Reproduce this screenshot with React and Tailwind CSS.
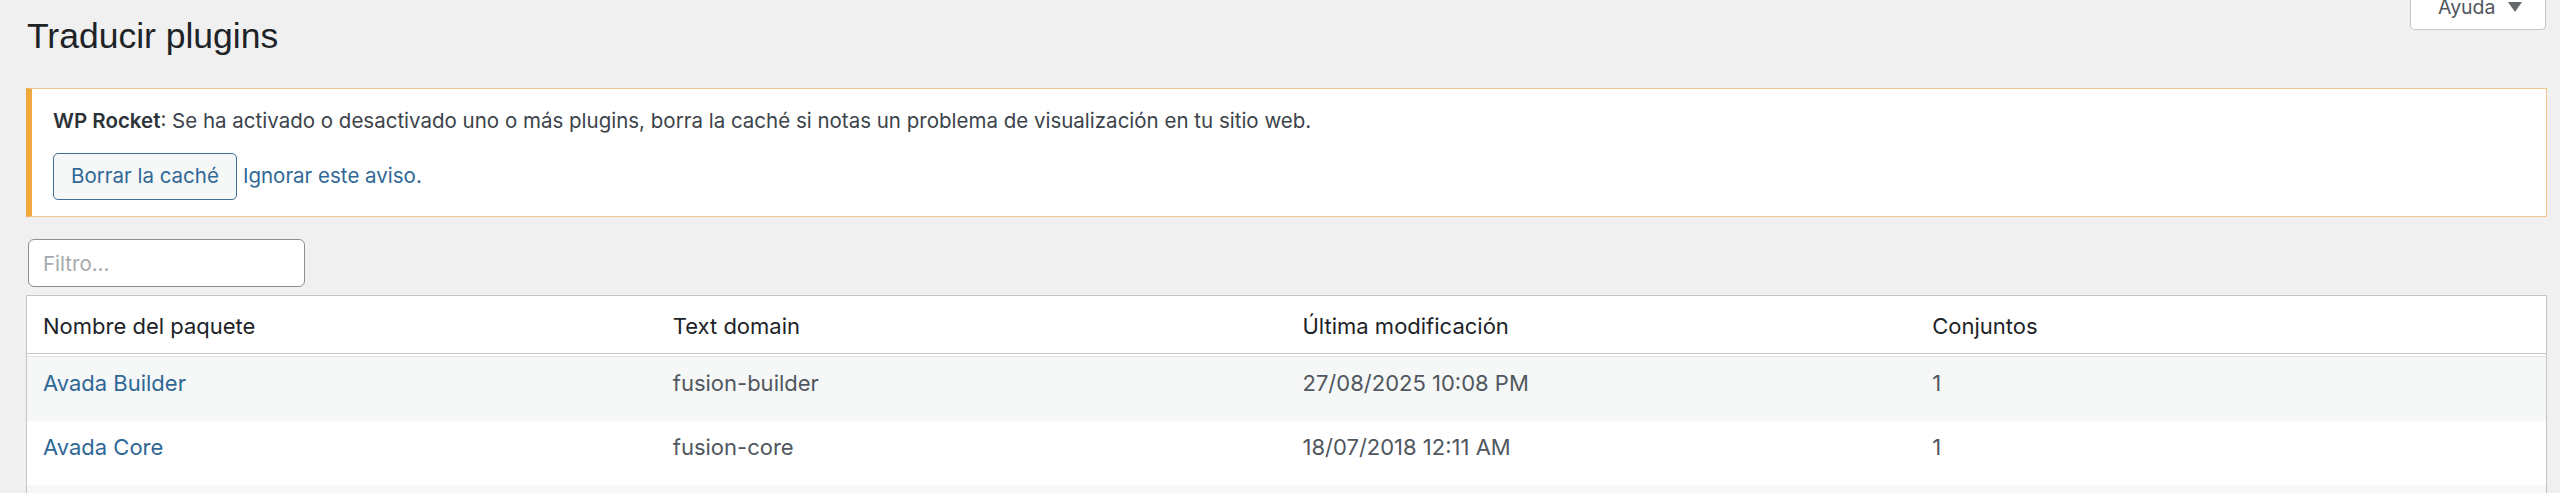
import { useState } from 'react'

const rows = [
  { name: 'Avada Builder', domain: 'fusion-builder', date: '27/08/2025 10:08 PM', sets: '1' },
  { name: 'Avada Core', domain: 'fusion-core', date: '18/07/2018 12:11 AM', sets: '1' },
  { name: '', domain: '', date: '', sets: '' },
]

export default function App() {
  const [filter, setFilter] = useState('')

  return (
    <div className="relative min-h-[493px] w-full overflow-hidden bg-[#f0f0f1] font-['Inter','Liberation_Sans',Arial,sans-serif] text-[20.5px] text-[#3c434a]">

      {/* Help tab */}
      <button className="absolute top-0 right-[14px] flex h-[30px] w-[136px] items-start gap-[12px] rounded-b-[5px] border border-t-0 border-[#c3c4c7] bg-white pl-[27px] text-[19.5px]">
        <span className="-mt-[8px] leading-[30px] text-[#50575e]">Ayuda</span>
        <svg width="14" height="10" viewBox="0 0 14 10" className="mt-[2px]">
          <path d="M0 0 H14 L7 10 Z" fill="#646970" />
        </svg>
      </button>

      <div className="pl-[26px] pr-[13px] pt-[10px]">
        <h1 className="pl-[1px] pt-[4px] font-['Liberation_Sans',Arial,sans-serif] text-[35.5px] leading-[45px] font-normal text-[#1d2327]">
          Traducir plugins
        </h1>

        {/* WP Rocket notice */}
        <div className="mt-[29px] border border-[#efc88c] border-l-[6px] border-l-[#f0a73c] bg-white pl-[21px] pt-[17px] pb-[16px]">
          <p className="leading-[30px] text-[#3c434a]">
            <strong className="font-semibold text-[#2c3338]">WP Rocket</strong>: Se ha activado o desactivado uno o más plugins, borra la caché si notas un problema de visualización en tu sitio web.
          </p>
          <div className="mt-[17px] flex items-center gap-[6px]">
            <button className="h-[47px] rounded-[5px] border border-[#3f6f98] bg-[#f6f7f7] px-[17px] text-[#2f6896]">
              Borrar la caché
            </button>
            <a href="#" className="text-[#2f6896]">Ignorar este aviso.</a>
          </div>
        </div>

        {/* Filter */}
        <input
          value={filter}
          onChange={e => setFilter(e.target.value)}
          placeholder="Filtro..."
          className="mt-[22px] ml-[2px] block h-[48px] w-[277px] rounded-[6px] border border-[#8c8f94] bg-white px-[14px] text-[20.5px] text-[#2c3338] placeholder:text-[#a7aaad] outline-none"
        />

        {/* Packages table */}
        <div className="mt-[8px] border border-b-0 border-[#c3c4c7] bg-white text-[22px]">
          <div className="grid h-[58px] grid-cols-4 border-b border-[#c3c4c7] pt-[15px] leading-[30px] text-[#1d2327]">
            <div className="pl-[16px]">Nombre del paquete</div>
            <div className="pl-[16px]">Text domain</div>
            <div className="pl-[16px]">Última modificación</div>
            <div className="pl-[16px]">Conjuntos</div>
          </div>
          <div className="h-[3px] border-b border-[#e2e3e4] bg-white" />
          {rows.map((r, i) => (
            <div key={i} className={`grid h-[64px] grid-cols-4 pt-[11px] leading-[30px] text-[#50575e] ${i % 2 === 0 ? 'bg-[#f6f7f7]' : 'bg-white'}`}>
              <div className="pl-[16px]"><a href="#" className="text-[#2f6896]">{r.name}</a></div>
              <div className="pl-[16px]">{r.domain}</div>
              <div className="pl-[16px]">{r.date}</div>
              <div className="pl-[16px]">{r.sets}</div>
            </div>
          ))}
        </div>
      </div>
    </div>
  )
}
